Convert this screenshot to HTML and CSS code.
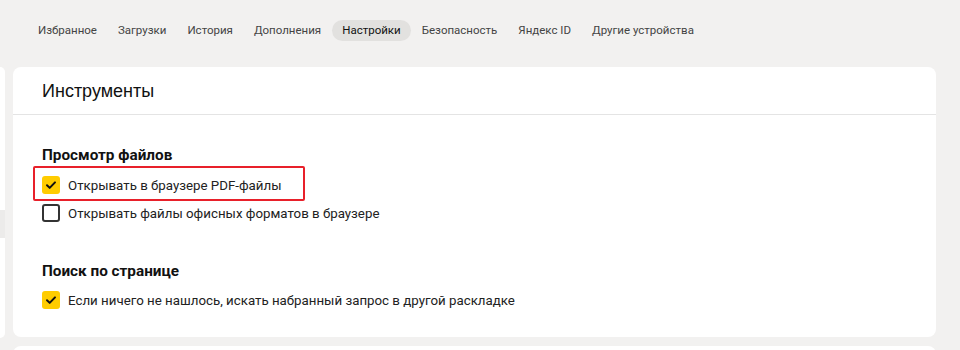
FILE: index.html
```html
<!DOCTYPE html>
<html lang="ru">
<head>
<meta charset="utf-8">
<link rel="stylesheet" href="styles.css">
</head>
<body>
<nav class="tabs">
  <span class="tab">Избранное</span>
  <span class="tab">Загрузки</span>
  <span class="tab">История</span>
  <span class="tab">Дополнения</span>
  <span class="tab active">Настройки</span>
  <span class="tab">Безопасность</span>
  <span class="tab">Яндекс ID</span>
  <span class="tab">Другие устройства</span>
</nav>
<div class="layout">
  <aside class="side">
    <div class="side-hover"></div>
  </aside>
  <main class="main">
    <section class="card">
      <header class="card-head">Инструменты</header>
      <div class="card-body">
        <h3 class="group-title">Просмотр файлов</h3>
        <div class="highlight">
          <label class="row"><span class="cb checked"><svg viewBox="0 0 18 18" width="18" height="18"><path d="M5 9.2l2.7 2.7L13 6.4" fill="none" stroke="#111" stroke-width="2" stroke-linecap="round" stroke-linejoin="round"/></svg></span>Открывать в браузере PDF-файлы</label>
        </div>
        <label class="row"><span class="cb"></span>Открывать файлы офисных форматов в браузере</label>
        <h3 class="group-title second">Поиск по странице</h3>
        <label class="row"><span class="cb checked"><svg viewBox="0 0 18 18" width="18" height="18"><path d="M5 9.2l2.7 2.7L13 6.4" fill="none" stroke="#111" stroke-width="2" stroke-linecap="round" stroke-linejoin="round"/></svg></span>Если ничего не нашлось, искать набранный запрос в другой раскладке</label>
      </div>
    </section>
    <section class="card next"></section>
  </main>
</div>
</body>
</html>
```

FILE: styles.css
```css
* { box-sizing: border-box; }
html, body { margin: 0; padding: 0; }
body {
  background: #f2f1f0;
  font-family: Roboto, "Liberation Sans", Arial, sans-serif;
  color: #000;
  width: 960px;
  height: 350px;
  overflow: hidden;
}
.tabs {
  display: flex;
  gap: 1px;
  padding: 20px 0 0 28px;
  height: 67px;
}
.tab {
  height: 21px;
  line-height: 21px;
  padding: 0 10px;
  font-size: 11.5px;
  color: #444;
  border-radius: 11px;
  white-space: nowrap;
}
.tab.active {
  background: #e2e1df;
  color: #111;
}
.layout {
  display: flex;
  gap: 8px;
  padding-right: 24px;
}
.side {
  width: 5px;
  height: 271px;
  background: #fff;
  border-radius: 0 6px 6px 0;
  padding-top: 143px;
  flex-shrink: 0;
}
.side-hover {
  height: 28px;
  background: #ecebea;
}
.main {
  flex: 1;
  display: flex;
  flex-direction: column;
  gap: 9px;
}
.card {
  background: #fff;
  border-radius: 8px;
}
.card-head {
  height: 48px;
  line-height: 48px;
  padding-left: 29px;
  font-family: "Liberation Sans", Arial, sans-serif;
  font-size: 18px;
  color: #111;
  border-bottom: 1px solid #e4e4e4;
}
.card-body {
  padding: 30px 29px 23px;
}
.group-title {
  margin: 0 0 6px;
  font-size: 15.3px;
  font-weight: bold;
  line-height: 20px;
  color: #111;
}
.group-title.second {
  margin: 34px 0 5px;
}
.row {
  display: flex;
  align-items: center;
  gap: 8px;
  height: 28px;
  font-size: 13.3px;
  color: #222;
  white-space: nowrap;
}
.cb {
  width: 18px;
  height: 18px;
  border-radius: 3px;
  border: 2px solid #333;
  flex-shrink: 0;
  display: flex;
}
.cb.checked {
  background: #ffcc00;
  border: none;
}
.highlight {
  width: fit-content;
  border: 2px solid #e8202a;
  border-radius: 2px;
  margin: -5px 0 -2px -9px;
  padding: 3px 21px 0 7px;
}
.card.next {
  height: 40px;
}
```
